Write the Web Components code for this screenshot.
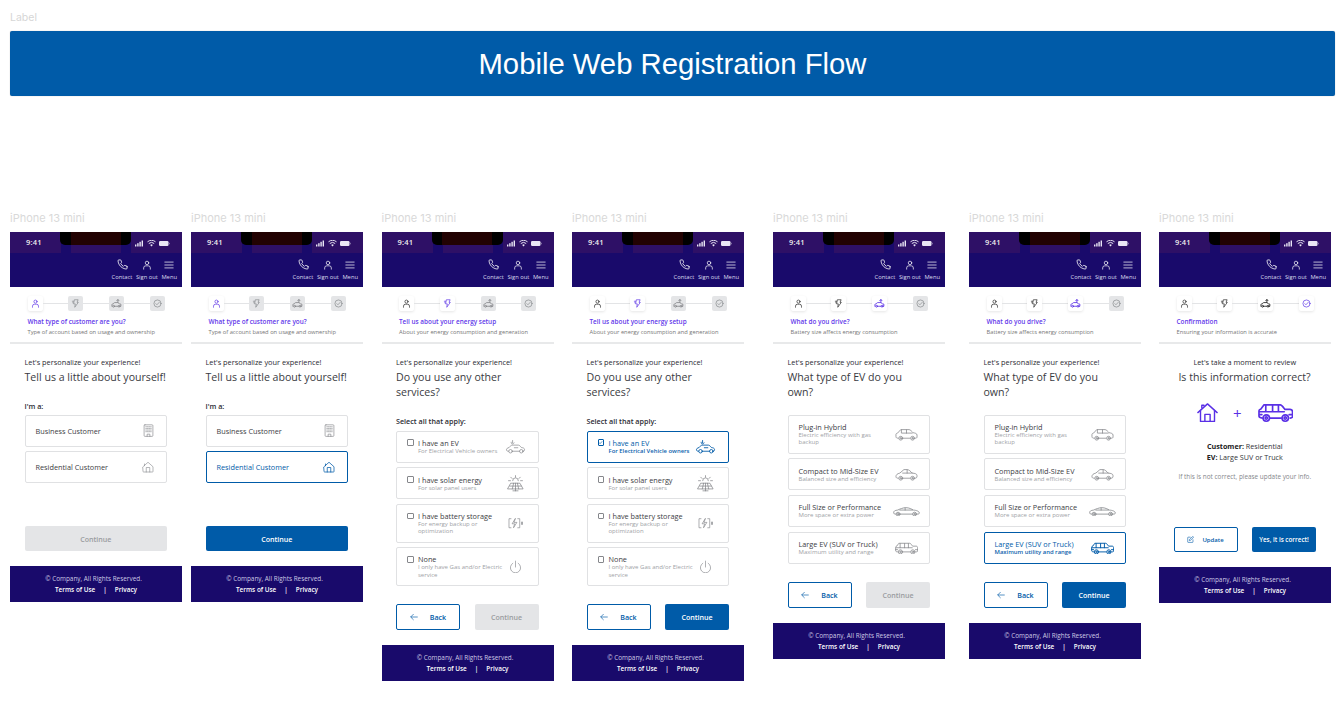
<!DOCTYPE html>
<html lang="en">
<head>
<meta charset="utf-8">
<title>Mobile Web Registration Flow</title>
<style>
  html, body { margin: 0; background: #fff; }
  body { width: 1342px; height: 702px; overflow: hidden; font-family: "Open Sans", sans-serif; }
</style>
</head>
<body>
<flow-board>
  <phone-frame offset="0" step="1" step-title="What type of customer are you?" step-sub="Type of account based on usage and ownership">
    <intro-copy lead="Let's personalize your experience!" heading="Tell us a little about yourself!"></intro-copy>
    <group-label space="16" text="I'm a:"></group-label>
    <choice-list>
      <choice-card heading="Business Customer" icon="building"></choice-card>
      <choice-card heading="Residential Customer" icon="house"></choice-card>
    </choice-list>
    <button-row space="43"><flow-button kind="disabled" wide>Continue</flow-button></button-row>
  </phone-frame>

  <phone-frame offset="9" step="1" step-title="What type of customer are you?" step-sub="Type of account based on usage and ownership">
    <intro-copy lead="Let's personalize your experience!" heading="Tell us a little about yourself!"></intro-copy>
    <group-label space="16" text="I'm a:"></group-label>
    <choice-list>
      <choice-card heading="Business Customer" icon="building"></choice-card>
      <choice-card heading="Residential Customer" icon="house" selected></choice-card>
    </choice-list>
    <button-row space="43"><flow-button kind="primary" wide>Continue</flow-button></button-row>
  </phone-frame>

  <phone-frame offset="18.5" step="2" step-title="Tell us about your energy setup" step-sub="About your energy consumption and generation">
    <intro-copy lead="Let's personalize your experience!" heading="Do you use any other services?"></intro-copy>
    <group-label space="16.5" text="Select all that apply:"></group-label>
    <choice-list space="5">
      <choice-card check heading="I have an EV" sub="For Electrical Vehicle owners" icon="ev"></choice-card>
      <choice-card check heading="I have solar energy" sub="For solar panel users" icon="solar"></choice-card>
      <choice-card check heading="I have battery storage" sub="For energy backup or optimization" icon="battery"></choice-card>
      <choice-card check heading="None" sub="I only have Gas and/or Electric service" icon="power"></choice-card>
    </choice-list>
    <button-row space="18">
      <flow-button kind="outline" icon="arrow">Back</flow-button>
      <flow-button kind="disabled">Continue</flow-button>
    </button-row>
  </phone-frame>

  <phone-frame offset="18.5" step="2" step-title="Tell us about your energy setup" step-sub="About your energy consumption and generation">
    <intro-copy lead="Let's personalize your experience!" heading="Do you use any other services?"></intro-copy>
    <group-label space="16.5" text="Select all that apply:"></group-label>
    <choice-list space="5">
      <choice-card check selected heading="I have an EV" sub="For Electrical Vehicle owners" icon="ev"></choice-card>
      <choice-card check heading="I have solar energy" sub="For solar panel users" icon="solar"></choice-card>
      <choice-card check heading="I have battery storage" sub="For energy backup or optimization" icon="battery"></choice-card>
      <choice-card check heading="None" sub="I only have Gas and/or Electric service" icon="power"></choice-card>
    </choice-list>
    <button-row space="18">
      <flow-button kind="outline" icon="arrow">Back</flow-button>
      <flow-button kind="primary">Continue</flow-button>
    </button-row>
  </phone-frame>

  <phone-frame offset="29" step="3" step-title="What do you drive?" step-sub="Battery size affects energy consumption">
    <intro-copy lead="Let's personalize your experience!" heading="What type of EV do you own?"></intro-copy>
    <choice-list space="16">
      <choice-card heading="Plug-in Hybrid" sub="Electric efficiency with gas backup" icon="suv"></choice-card>
      <choice-card heading="Compact to Mid-Size EV" sub="Balanced size and efficiency" icon="compact"></choice-card>
      <choice-card heading="Full Size or Performance" sub="More space or extra power" icon="sedan"></choice-card>
      <choice-card heading="Large EV (SUV or Truck)" sub="Maximum utility and range" icon="truck"></choice-card>
    </choice-list>
    <button-row space="18">
      <flow-button kind="outline" icon="arrow">Back</flow-button>
      <flow-button kind="disabled">Continue</flow-button>
    </button-row>
  </phone-frame>

  <phone-frame offset="24" step="3" step-title="What do you drive?" step-sub="Battery size affects energy consumption">
    <intro-copy lead="Let's personalize your experience!" heading="What type of EV do you own?"></intro-copy>
    <choice-list space="16">
      <choice-card heading="Plug-in Hybrid" sub="Electric efficiency with gas backup" icon="suv"></choice-card>
      <choice-card heading="Compact to Mid-Size EV" sub="Balanced size and efficiency" icon="compact"></choice-card>
      <choice-card heading="Full Size or Performance" sub="More space or extra power" icon="sedan"></choice-card>
      <choice-card heading="Large EV (SUV or Truck)" sub="Maximum utility and range" icon="truck" selected></choice-card>
    </choice-list>
    <button-row space="18">
      <flow-button kind="outline" icon="arrow">Back</flow-button>
      <flow-button kind="primary">Continue</flow-button>
    </button-row>
  </phone-frame>

  <phone-frame offset="18" step="4" step-title="Confirmation" step-sub="Ensuring your information is accurate">
    <intro-copy centered lead="Let's take a moment to review" heading="Is this information correct?"></intro-copy>
    <review-summary></review-summary>
    <button-row space="45.5">
      <flow-button kind="outline" icon="edit">Update</flow-button>
      <flow-button kind="primary" small>Yes, it is correct!</flow-button>
    </button-row>
  </phone-frame>
</flow-board>

<script>
const icons = {
  phone: [24, 24, '<path d="M22 16.9v3a2 2 0 0 1-2.2 2 19.8 19.8 0 0 1-8.6-3 19.5 19.5 0 0 1-6-6 19.8 19.8 0 0 1-3-8.7A2 2 0 0 1 4.1 2h3a2 2 0 0 1 2 1.7c.1 1 .4 1.9.7 2.8a2 2 0 0 1-.4 2.1L8.1 9.9a16 16 0 0 0 6 6l1.3-1.3a2 2 0 0 1 2.1-.4c.9.3 1.8.6 2.8.7a2 2 0 0 1 1.7 2z"/>'],
  user: [24, 24, '<circle cx="12" cy="7" r="4.2"/><path d="M4 22v-3a5 5 0 0 1 5-5h6a5 5 0 0 1 5 5v3"/>'],
  menu: [24, 24, '<path d="M2 5h20M2 12h20M2 19h20"/>'],
  bolt: [24, 24, '<path d="M10 2h9l-3 7h3.5L10 22l1.5-9H8z"/><path d="M7 6H3.5M6 10H4.5"/>'],
  plugcar: [24, 24, '<path d="M2 18v-3.5c0-1 1-1.800 2.500-2L8 10h7l3 2.500 3.500.8V18H20M7.500 18H15"/><circle cx="5.5" cy="18" r="2"/><circle cx="17.5" cy="18" r="2"/><path d="M15 10V3.500M12.500 6 15 3.300 17.500 6"/>'],
  check: [24, 24, '<circle cx="12" cy="12" r="9.5"/><path d="m7.500 12.300 3 3 6-6.300"/>'],
  building: [20, 24, '<rect x="2" y="1.5" width="16" height="21" rx="1.5"/><path d="M7.500 22.500v-4h5v4"/><path stroke-dasharray="1.4 1.6" d="M5 5h10M5 8h10M5 11h10M5 14h10"/>'],
  house: [24, 24, '<path d="M2 11.500 12 2.500l10 9V21a1 1 0 0 1-1 1H3a1 1 0 0 1-1-1z"/><path d="M8.500 22v-9h7v9"/><path d="M5 9.500V6"/>'],
  homebig: [24, 22, '<path d="M1 11 12 1l11 10"/><path d="M4 8.500V21h16V8.500"/><path d="M9 21v-8h6v8"/><path d="M5.500 5.500V2.500h2.500v.5"/>'],
  ev: [36, 26, '<path d="M6 21c-2.500 0-3.500-.8-3.500-2.500 0-2 1.800-3.300 4.500-3.800L11 10.500h12c2 0 3.500 2.500 5 4 3 .5 5.500 1.300 5.500 3.500 0 2.500-1 3-3 3M13 21h12"/><circle cx="9.5" cy="21" r="3"/><circle cx="28" cy="21" r="3"/><path d="M13 2.500v4M10.500 5.500c0 2 1 3 2.500 3s2-1 2.500-2M16 15h6"/>'],
  solar: [30, 26, '<path d="M8 13h14l5 9H3z"/><path d="M6 17.500h18M12 13l-2 9M18 13l2 9M15 13v9M15 22v3M11 25h8"/><path d="M10.500 9a4.500 4.500 0 0 1 9 0M15 1v2.500M7.500 3.500 9.500 5.500M22.500 3.500l-2 2M4 9h3M23 9h3"/>'],
  battery: [30, 22, '<path d="M7 3H3.500v16H7M19 3h3.500v16H19"/><path d="M14.500 3 9 12h4.500L11.500 19l6-9.500h-4.500z"/><path d="M26.500 9v4" stroke-width="2.5"/>'],
  power: [24, 24, '<path d="M12 2v11"/><path d="M7 6a9.500 9.500 0 1 0 10 0"/>'],
  suv: [36, 20, '<path d="M5 16c-2 0-3.500-.5-3.500-2.500V10c0-1 .8-1.500 2.500-2L9 2.500h13c2 0 5 3.500 6.500 5 2.500.3 6 1 6 3.500v3c0 1.500-1 2-2.500 2M12.500 16h11M10 3v5h17M18 3v5"/><circle cx="9" cy="16" r="3"/><circle cx="27.5" cy="16" r="3"/><circle cx="9" cy="16" r="1"/><circle cx="27.5" cy="16" r="1"/>'],
  compact: [36, 20, '<path d="M5 16c-2 0-3.500-.5-3.500-2.500 0-3 2-4.500 6-5.500L14 2.500h5c3 0 5.500 3 8 5.500 4 .3 7.500 1 7.500 4s-.8 4-2.500 4M12.500 16h11M12 8h15M19 3v5"/><circle cx="9" cy="16" r="3"/><circle cx="27.5" cy="16" r="3"/><circle cx="9" cy="16" r="1"/><circle cx="27.5" cy="16" r="1"/>'],
  sedan: [40, 16, '<path d="M4 12c-2 0-3-.5-3-2 0-2.500 1.500-3.500 6-4 3-1.500 8-3.500 12-3.500 5 0 8.500 2 11 3.500 4 .3 9 1.500 9 4.500 0 1-1 1.500-3 1.500M11 12h18M10 6h19M18 3v3"/><circle cx="7.5" cy="12" r="2.8"/><circle cx="32" cy="12" r="2.8"/><circle cx="7.5" cy="12" r="1"/><circle cx="32" cy="12" r="1"/>'],
  truck: [36, 20, '<path d="M4.500 15.500c-2 0-3.500-.5-3.500-2V8c0-1 1-1.500 2-1.800L6 2h17c1.500 0 3 2.500 4.500 4.500H33c1.500 0 2.500 1 2.500 2.500v5c0 1-1 1.500-2.500 1.500M12.500 15.500H24M2 9h25M8 2.500V9M15 2.500V9M21 2.500V9M1 12h3M32 12h3.500"/><circle cx="8.5" cy="15.500" r="3.3"/><circle cx="28" cy="15.500" r="3.3"/><circle cx="8.5" cy="15.500" r="1.2"/><circle cx="28" cy="15.500" r="1.2"/>'],
  arrow: [24, 24, '<path d="M22 12H3M10 4l-8 8 8 8"/>'],
  edit: [24, 24, '<path d="M11 4H4a1.500 1.500 0 0 0-1.500 1.500v15A1.500 1.500 0 0 0 4 22h15a1.500 1.500 0 0 0 1.500-1.500V13"/><path d="M18.500 2.500a2.100 2.100 0 0 1 3 3L12 15l-4 1 1-4z"/>'],
  tick: [24, 24, '<path d="m5 12.500 5 5 9-10"/>']
};

class UiIcon extends HTMLElement {
  connectedCallback () {
    const [w, h, body] = icons[this.getAttribute('name')];
    const width = this.getAttribute('width') || 12;
    const stroke = this.getAttribute('stroke') || 1.6;
    const height = width * h / w;
    this.attachShadow({ mode: 'open' }).innerHTML = `
      <style>:host { display: inline-flex; flex: none; line-height: 0; }</style>
      <svg width="${width}" height="${height}" viewBox="0 0 ${w} ${h}" fill="none" stroke="currentColor"
        stroke-width="${stroke}" stroke-linecap="round" stroke-linejoin="round">${body}</svg>`;
  }
}
customElements.define('ui-icon', UiIcon);

class FlowBoard extends HTMLElement {
  connectedCallback () {
    this.attachShadow({ mode: 'open' }).innerHTML = `
      <style>
        :host { display: block; padding: 12px 7px 0 10px; }
        .label { font: 10.5px/12px Inter, sans-serif; color: #d6d6d6; }
        .banner {
          margin-top: 7px; height: 65px; padding-top: 1px; box-sizing: border-box; background: #005ba8; border-radius: 2px;
          box-shadow: 0 0 1px rgba(0,0,0,.35);
          display: flex; align-items: center; justify-content: center;
          font: 29.25px "Liberation Sans", Arial, sans-serif; color: #fff;
        }
        .row { display: flex; align-items: flex-start; margin-top: 115px; }
      </style>
      <div class="label">Label</div>
      <div class="banner">Mobile Web Registration Flow</div>
      <div class="row"><slot></slot></div>`;
  }
}
customElements.define('flow-board', FlowBoard);

class PhoneFrame extends HTMLElement {
  connectedCallback () {
    const offset = this.getAttribute('offset');
    this.attachShadow({ mode: 'open' }).innerHTML = `
      <style>
        :host { display: block; flex: none; width: 172px; margin-left: ${offset}px; background: #fff; }
        .name { font: 11px/14px Inter, sans-serif; color: #d9d9d9; height: 21px; }
        .body { display: flex; flex-direction: column; padding: 0 15px 0 14.5px; }
      </style>
      <div class="name">iPhone 13 mini</div>
      <app-header></app-header>
      <step-bar step="${this.getAttribute('step')}" heading="${this.getAttribute('step-title')}" sub="${this.getAttribute('step-sub')}"></step-bar>
      <div class="body"><slot></slot></div>
      <app-footer></app-footer>`;
  }
}
customElements.define('phone-frame', PhoneFrame);

class AppHeader extends HTMLElement {
  connectedCallback () {
    const action = (icon, label, w) => `<div class="action"><ui-icon name="${icon}" width="${w}" stroke="1.7"></ui-icon><span>${label}</span></div>`;
    this.attachShadow({ mode: 'open' }).innerHTML = `
      <style>
        :host { display: block; height: 55px; background: #190a6b; position: relative; color: #fff; }
        .status { display: flex; justify-content: space-between; height: 21px; }
        .status div { background: #2e1066; width: 51px; }
        .status .mid { width: 50px; }
        .notch {
          position: absolute; left: 50px; top: 0; width: 71px; height: 13px; background: #000;
          border-radius: 0 0 5px 5px; display: flex; justify-content: center;
        }
        .notch i { display: block; width: 50px; height: 13px; background: #220202; }
        .time { position: absolute; left: 16px; top: 5px; font: 600 7.5px/10px "Open Sans", sans-serif; letter-spacing: .2px; color: #eee; }
        .sys { position: absolute; left: 125px; top: 7.5px; }
        .nav { display: flex; justify-content: flex-end; gap: 3.5px; padding: 6px 5px 0 0; }
        .action { display: flex; flex-direction: column; align-items: center; gap: 4px; }
        .action ui-icon { height: 11px; align-items: center; }
        .action span { font: 5.8px/7px "Open Sans", sans-serif; color: #dcdcee; white-space: nowrap; }
      </style>
      <div class="status"><div></div><div class="mid"></div><div></div></div>
      <div class="notch"><i></i></div>
      <span class="time">9:41</span>
      <svg class="sys" width="35" height="7" viewBox="0 0 35 7" fill="#e9e6f4">
        <rect x="0" y="4.5" width="1.4" height="2"/><rect x="2.2" y="3.2" width="1.4" height="3.3"/>
        <rect x="4.4" y="1.8" width="1.4" height="4.7"/><rect x="6.6" y=".5" width="1.4" height="6"/>
        <path d="M12.500 1.800a6.500 6.500 0 0 1 8 0M13.800 3.500a4.200 4.200 0 0 1 5.400 0" fill="none" stroke="#e9e6f4" stroke-width="1"/>
        <path d="M15.200 4.900a2 2 0 0 1 2.600 0L16.500 6.500z"/>
        <rect x="24" y="1" width="9.5" height="5" rx="1.2"/><rect x="34" y="2.8" width=".7" height="1.5" opacity=".6"/>
      </svg>
      <div class="nav">${action('phone', 'Contact', 11)}${action('user', 'Sign out', 10)}${action('menu', 'Menu', 10)}</div>`;
  }
}
customElements.define('app-header', AppHeader);

class StepBar extends HTMLElement {
  connectedCallback () {
    const step = Number(this.getAttribute('step'));
    const names = ['user', 'bolt', 'plugcar', 'check'];
    const boxes = names.map((name, i) => {
      const state = i + 1 < step ? 'done' : i + 1 === step ? 'active' : 'todo';
      return `<span class="box ${state}"><ui-icon name="${name}" width="${name === 'plugcar' ? 11 : 9}" stroke="1.8"></ui-icon></span>`;
    }).join('<i></i>');
    this.attachShadow({ mode: 'open' }).innerHTML = `
      <style>
        :host { display: block; height: 57px; box-sizing: border-box; padding: 9px 17px 0 17.5px; border-bottom: 2px solid #e8e9ea; }
        .track { display: flex; align-items: center; }
        .track i { flex: 1; height: 1px; background: #e3e4e6; }
        .box { width: 15px; height: 15px; border-radius: 2px; display: flex; align-items: center; justify-content: center; box-sizing: border-box; }
        .done { background: #fff; color: #222; box-shadow: 0 1px 3px rgba(0,0,0,.1); }
        .active { background: #fff; color: #5a30e6; box-shadow: 0 1px 3px rgba(0,0,0,.1); }
        .todo { background: #e4e5e7; color: #85878b; }
        .title { margin-top: 6px; font: 600 6.4px/10px "Open Sans", sans-serif; color: #5f38ea; white-space: nowrap; }
        .sub { font: 5.75px/10px "Open Sans", sans-serif; color: #777; white-space: nowrap; }
      </style>
      <div class="track">${boxes}</div>
      <div class="title">${this.getAttribute('heading')}</div>
      <div class="sub">${this.getAttribute('sub')}</div>`;
  }
}
customElements.define('step-bar', StepBar);

class AppFooter extends HTMLElement {
  connectedCallback () {
    this.attachShadow({ mode: 'open' }).innerHTML = `
      <style>
        :host {
          display: flex; flex-direction: column; align-items: center; height: 36px; margin-top: 15px;
          padding-top: 7px; box-sizing: border-box; background: #190a6b;
          font: 6.4px/11px "Open Sans", sans-serif; color: #cdc9e4;
        }
        .copy { padding-right: 5px; }
        .links { display: flex; gap: 8px; font-weight: 600; color: #fff; }
      </style>
      <div class="copy">© Company, All Rights Reserved.</div>
      <div class="links"><span>Terms of Use</span><span>|</span><span>Privacy</span></div>`;
  }
}
customElements.define('app-footer', AppFooter);

class IntroCopy extends HTMLElement {
  connectedCallback () {
    const centered = this.hasAttribute('centered');
    this.attachShadow({ mode: 'open' }).innerHTML = `
      <style>
        :host { display: block; padding-top: 13px; color: #2b2b33; text-align: ${centered ? 'center' : 'left'}; }
        .lead { font: 7.35px/10px "Open Sans", sans-serif; }
        .heading { margin-top: 3px; font: 10.6px/14.5px "Open Sans", sans-serif; color: #3a3b42; width: 142px; }
      </style>
      <div class="lead">${this.getAttribute('lead')}</div>
      <div class="heading">${this.getAttribute('heading')}</div>`;
  }
}
customElements.define('intro-copy', IntroCopy);

class GroupLabel extends HTMLElement {
  connectedCallback () {
    this.attachShadow({ mode: 'open' }).innerHTML = `
      <style>:host { display: block; margin-top: ${this.getAttribute('space')}px; font: 600 7.2px/10px "Open Sans", sans-serif; color: #2b2b33; }</style>
      ${this.getAttribute('text')}`;
  }
}
customElements.define('group-label', GroupLabel);

class ChoiceList extends HTMLElement {
  connectedCallback () {
    const space = this.getAttribute('space') || 4;
    this.attachShadow({ mode: 'open' }).innerHTML = `
      <style>:host { display: flex; flex-direction: column; gap: 4.8px; margin-top: ${space}px; }</style>
      <slot></slot>`;
  }
}
customElements.define('choice-list', ChoiceList);

class ChoiceCard extends HTMLElement {
  connectedCallback () {
    const selected = this.hasAttribute('selected');
    const sub = this.getAttribute('sub');
    const check = this.hasAttribute('check');
    const widths = { building: 11, house: 12, ev: 21, solar: 19, battery: 17, power: 13, suv: 23, compact: 23, sedan: 27, truck: 23 };
    const name = this.getAttribute('icon');
    const box = check ? `<span class="box">${selected ? '<ui-icon name="tick" width="5" stroke="3"></ui-icon>' : ''}</span>` : '';
    this.attachShadow({ mode: 'open' }).innerHTML = `
      <style>
        :host {
          display: flex; align-items: center; box-sizing: border-box; min-height: 32px; padding: 5.85px 10px;
          background: #fff; border: 1px solid #e0e1e3; border-radius: 2px;
        }
        :host([selected]) { border-color: #005ba8; }
        .box {
          flex: none; align-self: flex-start; display: flex; align-items: center; justify-content: center;
          width: 6.5px; height: 6.5px; margin: 2px 4.5px 0 0; border: .8px solid #85878b; border-radius: 1px; box-sizing: border-box;
        }
        :host([selected]) .box { border-color: #005ba8; color: #005ba8; }
        .text { flex: 1; min-width: 0; }
        .heading { font: 7.3px/10px "Open Sans", sans-serif; color: #3c3d44; }
        .sub { font: 6px/7.4px "Open Sans", sans-serif; color: #a0a2a6; max-width: 86px; }
        .art { display: flex; justify-content: center; color: #85878b; margin-right: 1px; }
        :host([selected]) .heading, :host([selected]) .art { color: #005ba8; }
        :host([selected]) .sub { color: #0b62ad; font-weight: 600; font-size: 5.9px; max-width: none; }
      </style>
      ${box}
      <div class="text">
        <div class="heading">${this.getAttribute('heading')}</div>
        ${sub ? `<div class="sub">${sub}</div>` : ''}
      </div>
      <div class="art" style="width:${sub ? 23 : 14}px"><ui-icon name="${name}" width="${widths[name]}" stroke="${selected ? 1.5 : 1.2}"></ui-icon></div>`;
  }
}
customElements.define('choice-card', ChoiceCard);

class ButtonRow extends HTMLElement {
  connectedCallback () {
    this.attachShadow({ mode: 'open' }).innerHTML = `
      <style>:host { display: flex; justify-content: space-between; margin-top: ${this.getAttribute('space')}px; }</style>
      <slot></slot>`;
  }
}
customElements.define('button-row', ButtonRow);

class FlowButton extends HTMLElement {
  connectedCallback () {
    const icon = this.getAttribute('icon');
    this.attachShadow({ mode: 'open' }).innerHTML = `
      <style>
        :host {
          display: flex; align-items: center; justify-content: center; gap: 10px;
          box-sizing: border-box; width: 64px; height: 26px; border-radius: 2px;
          font: 600 7.1px "Open Sans", sans-serif; white-space: nowrap;
        }
        :host([wide]), :host([small]), :host([icon=edit]) { height: 25px; }
        :host([wide]) { width: 100%; }
        :host([small]) { font-size: 6.3px; }
        :host([kind=primary]) { background: #005ba8; color: #fff; }
        :host([kind=disabled]) { background: #e4e5e7; color: #9a9ca0; }
        :host([kind=outline]) { background: #fff; color: #005ba8; border: 1px solid #005ba8; gap: 8px; }
        :host([icon=arrow]) { gap: 12px; }
        :host([icon=edit]) { font-size: 6px; }
      </style>
      ${icon ? `<ui-icon name="${icon}" width="${icon === 'arrow' ? 8 : 7}" stroke="2"></ui-icon>` : ''}<slot></slot>`;
  }
}
customElements.define('flow-button', FlowButton);

class ReviewSummary extends HTMLElement {
  connectedCallback () {
    this.attachShadow({ mode: 'open' }).innerHTML = `
      <style>
        :host { display: block; margin-top: 18.5px; text-align: center; }
        .art { display: flex; align-items: center; justify-content: center; color: #5a30e6; height: 20px; }
        .plus { font: 400 15px/20px "Open Sans", sans-serif; margin: 0 16px 0 15px; }
        .facts { margin-top: 17.5px; font: 7.2px/11px "Open Sans", sans-serif; color: #33343b; }
        .facts b { font-weight: 700; color: #222; }
        .note { margin-top: 9px; font: 6.4px/10px "Open Sans", sans-serif; color: #85878b; white-space: nowrap; }
      </style>
      <div class="art">
        <ui-icon name="homebig" width="21" stroke="1.6"></ui-icon>
        <span class="plus">+</span>
        <ui-icon name="truck" width="35" stroke="1.7"></ui-icon>
      </div>
      <div class="facts"><div><b>Customer:</b> Residential</div><div><b>EV:</b> Large SUV or Truck</div></div>
      <div class="note">If this is not correct, please update your info.</div>`;
  }
}
customElements.define('review-summary', ReviewSummary);
</script>
</body>
</html>
